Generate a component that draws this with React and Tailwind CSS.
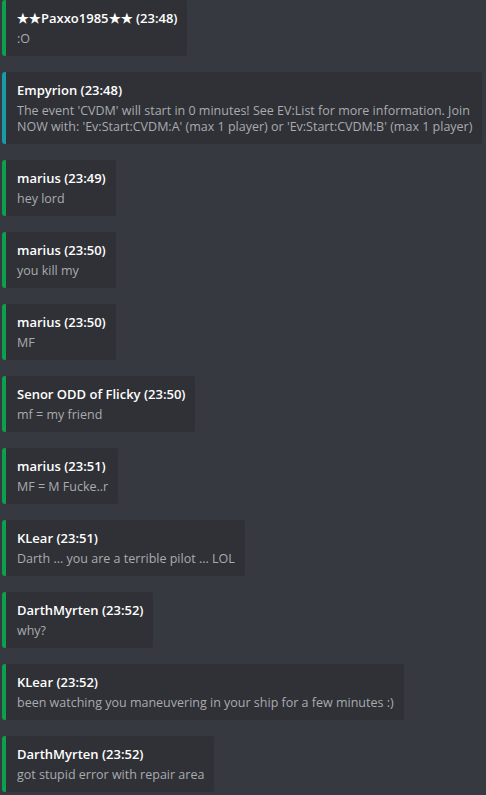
import React from 'react'

const messages = [
  { name: '★★Paxxo1985★★', time: '23:48', lines: [':O'] },
  {
    name: 'Empyrion',
    time: '23:48',
    server: true,
    lines: [
      "The event 'CVDM' will start in 0 minutes! See EV:List for more information. Join",
      "NOW with: 'Ev:Start:CVDM:A' (max 1 player) or 'Ev:Start:CVDM:B' (max 1 player)",
    ],
  },
  { name: 'marius', time: '23:49', lines: ['hey lord'] },
  { name: 'marius', time: '23:50', lines: ['you kill my'] },
  { name: 'marius', time: '23:50', lines: ['MF'] },
  { name: 'Senor ODD of Flicky', time: '23:50', lines: ['mf = my friend'] },
  { name: 'marius', time: '23:51', lines: ['MF = M Fucke..r'] },
  { name: 'KLear', time: '23:51', lines: ['Darth ... you are a terrible pilot ... LOL'] },
  { name: 'DarthMyrten', time: '23:52', lines: ['why?'] },
  { name: 'KLear', time: '23:52', lines: ['been watching you maneuvering in your ship for a few minutes :)'] },
  { name: 'DarthMyrten', time: '23:52', lines: ['got stupid error with repair area'] },
]

function Message({ msg }) {
  return (
    <div
      className={
        'self-start ml-[2px] rounded-[3px] border-l-4 bg-[#2f3136] pl-[11px] pr-[10px] pt-[8px] pb-[9px] ' +
        (msg.server ? 'border-[#1a9aa5]' : 'border-[#0e9f4e]')
      }
    >
      <div className="text-[13px] leading-5 font-semibold text-white whitespace-nowrap">
        {msg.name} ({msg.time})
      </div>
      <div className="mt-[3px] text-[12.5px] leading-4 text-[#a9abaf] whitespace-nowrap">
        {msg.lines.map((l, i) => (
          <div key={i}>{l}</div>
        ))}
      </div>
    </div>
  )
}

export default function App() {
  return (
    <div
      className="h-[795px] w-[486px] overflow-hidden bg-[#36393f] flex flex-col gap-4"
      style={{ fontFamily: '"Open Sans", "Noto Sans", sans-serif' }}
    >
      {messages.map((m, i) => (
        <Message key={i} msg={m} />
      ))}
    </div>
  )
}
